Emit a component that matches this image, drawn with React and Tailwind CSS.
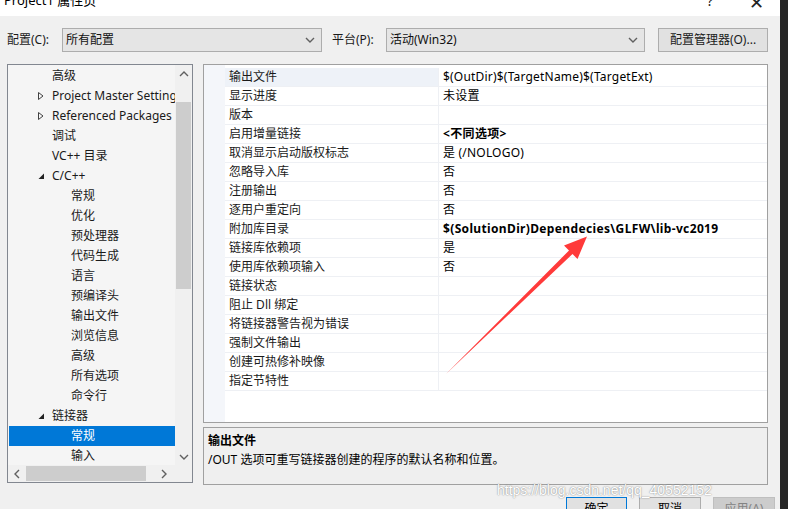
import React from "react";

const FONT = { fontFamily: '"Noto Sans", "Noto Sans CJK SC", sans-serif' };

const treeItems = [
  { t: "高级", l: 1 },
  { t: "Project Master Settings", l: 1, tri: "closed" },
  { t: "Referenced Packages", l: 1, tri: "closed" },
  { t: "调试", l: 1 },
  { t: "VC++ 目录", l: 1 },
  { t: "C/C++", l: 1, tri: "open" },
  { t: "常规", l: 2 },
  { t: "优化", l: 2 },
  { t: "预处理器", l: 2 },
  { t: "代码生成", l: 2 },
  { t: "语言", l: 2 },
  { t: "预编译头", l: 2 },
  { t: "输出文件", l: 2 },
  { t: "浏览信息", l: 2 },
  { t: "高级", l: 2 },
  { t: "所有选项", l: 2 },
  { t: "命令行", l: 2 },
  { t: "链接器", l: 1, tri: "open" },
  { t: "常规", l: 2, sel: true },
  { t: "输入", l: 2 },
];

const rows = [
  ["输出文件", "$(OutDir)$(TargetName)$(TargetExt)"],
  ["显示进度", "未设置"],
  ["版本", ""],
  ["启用增量链接", "<不同选项>", true],
  ["取消显示启动版权标志", "是 (/NOLOGO)"],
  ["忽略导入库", "否"],
  ["注册输出", "否"],
  ["逐用户重定向", "否"],
  ["附加库目录", "$(SolutionDir)Dependecies\\GLFW\\lib-vc2019", true],
  ["链接库依赖项", "是"],
  ["使用库依赖项输入", "否"],
  ["链接状态", ""],
  ["阻止 Dll 绑定", ""],
  ["将链接器警告视为错误", ""],
  ["强制文件输出", ""],
  ["创建可热修补映像", ""],
  ["指定节特性", ""],
];

function Chevron({ dir = "down", className = "" }) {
  const paths = {
    down: "M1 3 L5 7 L9 3",
    up: "M1 7 L5 3 L9 7",
    left: "M7 1 L3 5 L7 9",
    right: "M3 1 L7 5 L3 9",
  };
  return (
    <svg width="10" height="10" viewBox="0 0 10 10" className={className}>
      <path d={paths[dir]} fill="none" stroke="currentColor" strokeWidth="1.4" />
    </svg>
  );
}

function Tri({ kind }) {
  if (kind === "closed")
    return (
      <svg width="8" height="10" viewBox="0 0 8 10">
        <path d="M1.5 1.5 L6 5 L1.5 8.5 Z" fill="none" stroke="#404040" strokeWidth="1" />
      </svg>
    );
  return (
    <svg width="8" height="10" viewBox="0 0 8 10">
      <path d="M7 2.5 L7 8 L1.5 8 Z" fill="#222" />
    </svg>
  );
}

function Select({ w, text }) {
  return (
    <div
      className={`${w} h-[24px] bg-[#e5e5e5] border border-[#adadad] flex items-center pl-[3px] pr-[6px] justify-between text-[#111]`}
    >
      <span>{text}</span>
      <Chevron dir="down" className="text-[#606060]" />
    </div>
  );
}

export default function App() {
  return (
    <div
      className="w-[788px] h-[509px] relative overflow-hidden bg-[#f0f0f0] flex text-[12px] text-[#1a1a1a]"
      style={FONT}
    >
      <div className="w-[780px] flex flex-col">
        {/* title bar */}
        <div className="h-[16px] shrink-0 bg-white overflow-hidden flex items-start">
          <span className="-mt-[9px] ml-[4px] text-[13px] text-black">Project1 属性页</span>
          <span className="-mt-[10px] ml-auto text-[14px] text-[#222]">?</span>
          <span className="-mt-[11px] ml-[36px] mr-[16px] text-[18px] text-[#222]">✕</span>
        </div>

        <div className="flex flex-col pl-[7px] shrink-0">
          {/* config row */}
          <div className="mt-[12px] flex items-center h-[24px] shrink-0">
            <span className="w-[55px]">配置(C):</span>
            <Select w="w-[260px]" text="所有配置" />
            <span className="ml-[10px] w-[54px]">平台(P):</span>
            <Select w="w-[259px]" text="活动(Win32)" />
            <div className="ml-[13px] w-[110px] h-[24px] bg-[#e1e1e1] border border-[#adadad] flex items-center justify-center">
              配置管理器(O)...
            </div>
          </div>

          {/* main */}
          <div className="mt-[12px] flex shrink-0">
            {/* tree */}
            <div className="w-[186px] h-[419px] border border-[#828790] bg-[#f5f5f5] flex flex-col">
              <div className="flex h-[400px] shrink-0">
                <div className="w-[167px] overflow-hidden pt-[1px] pl-[1px]">
                  {treeItems.map((it, i) => (
                    <div
                      key={i}
                      className={`h-[20px] flex items-center whitespace-nowrap ${
                        it.sel ? "bg-[#0078d7] text-white" : ""
                      }`}
                    >
                      <div className="w-[28px] shrink-0" />
                      <div className="w-[15px] shrink-0 flex items-center">
                        {it.tri ? <Tri kind={it.tri} /> : null}
                      </div>
                      {it.l === 2 ? <div className="w-[19px] shrink-0" /> : null}
                      <span>{it.t}</span>
                    </div>
                  ))}
                </div>
                <div className="w-[17px] bg-[#f0f0f0] flex flex-col items-center">
                  <div className="h-[17px] flex items-center justify-center text-[#606060]">
                    <Chevron dir="up" />
                  </div>
                  <div className="mt-[20px] h-[187px] w-[15px] bg-[#cdcdcd] -ml-[1px]" />
                  <div className="mt-auto h-[17px] flex items-center justify-center text-[#606060]">
                    <Chevron dir="down" />
                  </div>
                </div>
              </div>
              <div className="flex h-[17px] shrink-0 bg-[#f0f0f0]">
                <div className="w-[167px] flex items-center">
                  <div className="w-[18px] flex justify-center text-[#606060]">
                    <Chevron dir="left" />
                  </div>
                  <div className="w-[120px] h-[15px] bg-[#cdcdcd]" />
                  <div className="ml-auto w-[18px] mr-[2px] flex justify-center text-[#606060]">
                    <Chevron dir="right" />
                  </div>
                </div>
                <div className="w-[17px]" />
              </div>
            </div>

            {/* right column */}
            <div className="ml-[10px] w-[565px] flex flex-col">
              <div className="h-[359px] shrink-0 border border-[#a0a0a0] bg-white flex pt-[3px]">
                <div className="w-[21px] bg-[#f4f6fa] -mt-[3px]" />
                <div className="flex-1 flex flex-col">
                  {rows.map(([n, v, b], i) => (
                    <div key={i} className="h-[19px] shrink-0 flex border-b border-[#eef0f4]">
                      <div
                        className={`w-[214px] pl-[4px] flex items-center border-r border-[#eef0f4] ${
                          i === 0 ? "bg-[#eef2f8]" : ""
                        }`}
                      >
                        {n}
                      </div>
                      <div
                        className={`flex-1 pl-[4px] flex items-center whitespace-nowrap ${
                          b ? "font-bold tracking-[0.35px]" : "tracking-[0.2px]"
                        } text-black`}
                      >
                        {v}
                      </div>
                    </div>
                  ))}
                </div>
              </div>
              <div className="mt-[4px] h-[58px] shrink-0 border border-[#a0a0a0] bg-[#efefef] pl-[4px] pt-[3px] flex flex-col">
                <div className="h-[19px] flex items-center font-bold text-black">输出文件</div>
                <div className="h-[19px] flex items-center text-black">
                  /OUT 选项可重写链接器创建的程序的默认名称和位置。
                </div>
              </div>
            </div>
          </div>

          {/* buttons */}
          <div className="mt-[12px] flex justify-end pr-[5px] gap-[12px] shrink-0">
            <div className="w-[61px] h-[23px] border border-[#0078d7] bg-[#e1e1e1] flex items-center justify-center text-black">
              确定
            </div>
            <div className="w-[62px] h-[23px] border border-[#adadad] bg-[#e1e1e1] flex items-center justify-center text-black">
              取消
            </div>
            <div className="w-[62px] h-[23px] border border-[#bfbfbf] bg-[#cccccc] flex items-center justify-center text-[#838383]">
              应用(A)
            </div>
          </div>
        </div>
      </div>
      <div className="w-[8px] bg-[#262626]" />

      {/* watermark */}
      <div
        className="absolute left-[497px] top-[480px] text-[14px] text-white pointer-events-none [text-shadow:0_0_1.5px_rgba(0,0,0,0.6)]"
        style={{ fontFamily: '"Liberation Sans", Arial, sans-serif' }}
      >
        https://blog.csdn.net/qq_40552152
      </div>

      {/* red arrow annotation */}
      <svg
        className="absolute left-0 top-0 pointer-events-none"
        width="788"
        height="509"
        viewBox="0 0 788 509"
      >
        <path
          d="M446 374 L569 250.5 L564 245.5 L587 236.5 L577.5 259 L572.5 254 Z"
          fill="#ff3a3a"
        />
      </svg>
    </div>
  );
}
